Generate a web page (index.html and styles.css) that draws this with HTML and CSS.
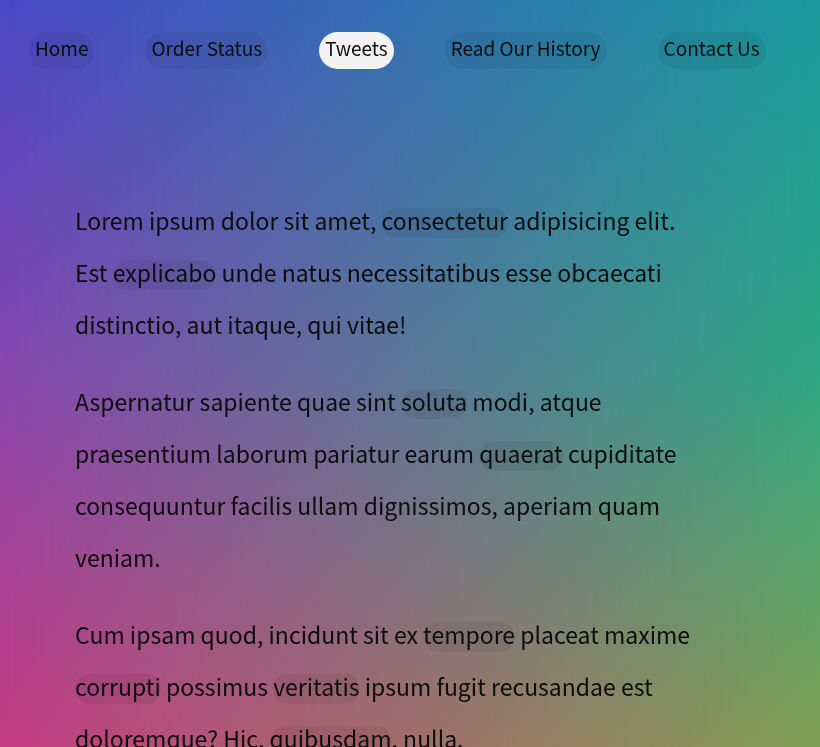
FILE: index.html
```html
<!DOCTYPE html>
<html lang="en">
<head>
  <meta charset="UTF-8">
  <meta name="viewport" content="width=device-width, initial-scale=1.0">
  <title>Tweets</title>
  <link rel="stylesheet" href="styles.css">
</head>
<body>

  <!-- Navigation -->
  <nav class="nav">
    <ul class="nav-list">
      <li><a href="#">Home</a></li>
      <li><a href="#">Order Status</a></li>
      <li><a href="#" class="active">Tweets</a></li>
      <li><a href="#">Read Our History</a></li>
      <li><a href="#">Contact Us</a></li>
    </ul>
  </nav>

  <!-- Content -->
  <main class="content">
    <p>Lorem ipsum dolor sit amet, <span class="mark">consectetur</span> adipisicing elit. Est <span class="mark">explicabo</span> unde natus necessitatibus esse obcaecati distinctio, aut itaque, qui vitae!</p>
    <p>Aspernatur sapiente quae sint <span class="mark">soluta</span> modi, atque praesentium laborum pariatur earum <span class="mark">quaerat</span> cupiditate consequuntur facilis ullam dignissimos, aperiam quam veniam.</p>
    <p>Cum ipsam quod, incidunt sit ex <span class="mark">tempore</span> placeat maxime <span class="mark">corrupti</span> possimus <span class="mark">veritatis</span> ipsum fugit recusandae est doloremque? Hic, <span class="mark">quibusdam</span>, nulla.</p>
  </main>

</body>
</html>
```

FILE: styles.css
```css
body {
  font-family: "Noto Sans CJK KR", "Noto Sans", sans-serif;
  color: #0d0d0d;
  margin: 0;
  padding: 0;
}

/* Background: left and right columns blended across the page */
body::before,
body::after {
  content: "";
  position: fixed;
  top: 0;
  left: 0;
  right: 0;
  bottom: 0;
  z-index: -1;
}
body::before {
  background: linear-gradient(to bottom, #4a48c6, #8846ae 50%, #c63c82);
}
body::after {
  background: linear-gradient(to bottom, #1a9a9e, #2ea882 50%, #7fa052);
  -webkit-mask-image: linear-gradient(to right, transparent, #000);
  mask-image: linear-gradient(to right, transparent, #000);
}

/* Navigation */
.nav-list {
  display: flex;
  gap: 51px;
  list-style: none;
  margin: 0;
  padding: 32px 0 0 29px;
}
.nav-list a {
  display: inline-block;
  font-size: 19px;
  line-height: 32px;
  padding: 0 6px 5px;
  border-radius: 20px;
  color: #0d0d0d;
  text-decoration: none;
  background: rgba(0, 0, 0, 0.06);
}
.nav-list a.active {
  background: #f2f2f2;
}

/* Content */
.content {
  width: 636px;
  padding: 125px 0 0 75px;
}
.content p {
  font-size: 23px;
  line-height: 52px;
  margin: 0 0 25px;
}
.mark {
  display: inline-block;
  line-height: 24px;
  padding-bottom: 6px;
  border-radius: 15px;
  background: rgba(0, 0, 0, 0.06);
}
```
